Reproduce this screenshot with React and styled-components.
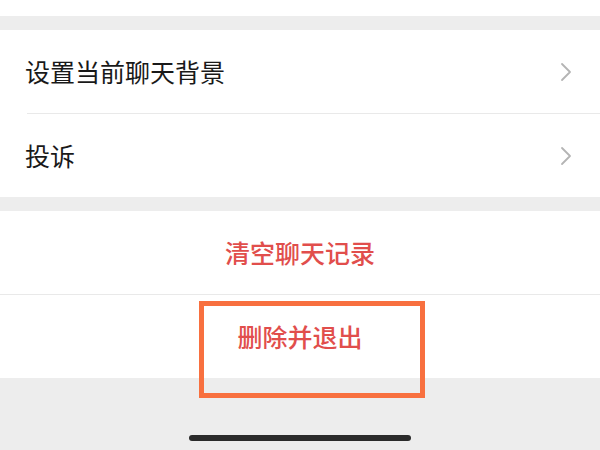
import React from 'react';
import styled, { createGlobalStyle } from 'styled-components';

// style
const colors = {
  page: '#ededed',
  white: '#ffffff',
  text: '#191919',
  danger: '#e14e4c',
  line: '#e9e9e9',
  chevron: '#b4b4b4',
  mark: '#f8703f'
};

const GlobalStyle = createGlobalStyle`
  html, body {
    margin: 0;
    padding: 0;
    background: ${colors.page};
  }
  body {
    font-family: "Noto Sans CJK SC", "Noto Sans", sans-serif;
    -webkit-font-smoothing: antialiased;
  }
`;

const settings = ['设置当前聊天背景', '投诉'];

const Chevron = () => (
  <svg width="12" height="20" viewBox="0 0 12 20" fill="none">
    <path d="M2 2 L10 10 L2 18" stroke={colors.chevron} strokeWidth="1.8" strokeLinecap="round" strokeLinejoin="round" />
  </svg>
);

const App = () => (
  <Screen>
    <GlobalStyle />
    <TopStrip />
    <Gap />
    <Group>
      {settings.map((label, index) => (
        <NavRow key={label} divider={index < settings.length - 1}>
          <Label>{label}</Label>
          <Chevron />
        </NavRow>
      ))}
    </Group>
    <Gap />
    <Group>
      <ActionRow divider>
        <Danger>清空聊天记录</Danger>
      </ActionRow>
      <ActionRow>
        <Danger>删除并退出</Danger>
        <Highlight />
      </ActionRow>
    </Group>
    <Bottom>
      <HomeBar />
    </Bottom>
  </Screen>
);

export default App;

const Screen = styled.div`
  width: 600px;
  height: 450px;
  overflow: hidden;
  display: flex;
  flex-direction: column;
  background: ${colors.page};
`;

const TopStrip = styled.div`
  height: 16px;
  background: ${colors.white};
`;

const Gap = styled.div`
  height: 14px;
  flex-shrink: 0;
`;

const Group = styled.div`
  display: flex;
  flex-direction: column;
  background: ${colors.white};
`;

const NavRow = styled.div`
  height: 83px;
  display: flex;
  align-items: center;
  justify-content: space-between;
  padding: 0 28px 0 25px;
  position: relative;
  margin-bottom: ${p => (p.divider ? '1px' : '0')};

  &::after {
    content: '';
    display: ${p => (p.divider ? 'block' : 'none')};
    position: absolute;
    left: 27px;
    right: 0;
    bottom: -1px;
    height: 1px;
    background: ${colors.line};
  }
`;

const Label = styled.span`
  font-size: 25px;
  line-height: 1;
  color: ${colors.text};
`;

const ActionRow = styled.div`
  height: 83px;
  display: flex;
  align-items: center;
  justify-content: center;
  position: relative;
  border-bottom: ${p => (p.divider ? `1px solid ${colors.line}` : 'none')};
`;

const Danger = styled.span`
  font-size: 25px;
  line-height: 1;
  color: ${colors.danger};
  font-weight: 500;
`;

// annotation frame drawn over the row
const Highlight = styled.div`
  position: absolute;
  left: 199px;
  top: 6px;
  width: 226px;
  height: 97px;
  box-sizing: border-box;
  border: 5px solid ${colors.mark};
  z-index: 2;
`;

const Bottom = styled.div`
  flex: 1;
  display: flex;
  align-items: flex-end;
  justify-content: center;
  padding-bottom: 9px;
`;

const HomeBar = styled.div`
  width: 222px;
  height: 6px;
  border-radius: 3px;
  background: #2b2b2b;
`;
